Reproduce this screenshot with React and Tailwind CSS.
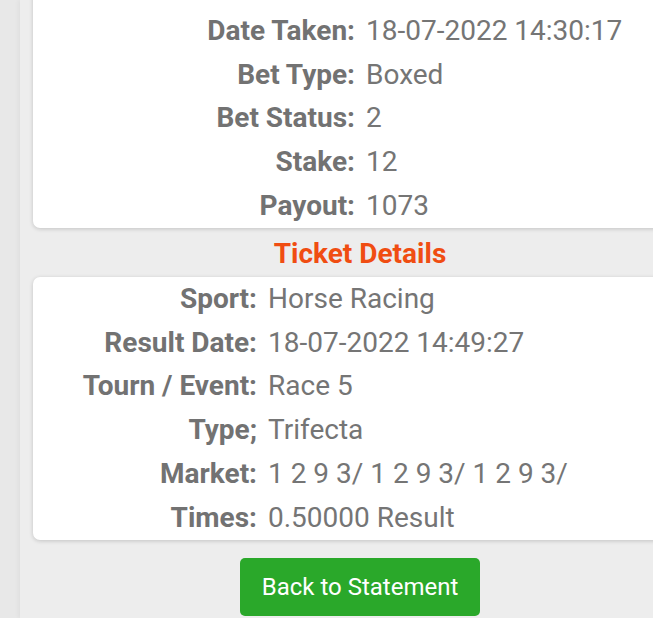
const summary = [
  ['Date Taken:', '18-07-2022 14:30:17'],
  ['Bet Type:', 'Boxed'],
  ['Bet Status:', '2'],
  ['Stake:', '12'],
  ['Payout:', '1073'],
]

const ticket = [
  ['Sport:', 'Horse Racing'],
  ['Result Date:', '18-07-2022 14:49:27'],
  ['Tourn / Event:', 'Race 5'],
  ['Type;', 'Trifecta'],
  ['Market:', '1 2 9 3/ 1 2 9 3/ 1 2 9 3/'],
  ['Times:', '0.50000 Result'],
]

const DetailRows = ({ rows, labelWidth }) => (
  <div className="flex flex-col">
    {rows.map(([label, value]) => (
      <div key={label} className="flex items-center h-[43.8px] whitespace-nowrap">
        <div className={`${labelWidth} text-right font-bold text-[#727272] shrink-0`}>{label}</div>
        <div className="pl-[11px] text-[#757575]">{value}</div>
      </div>
    ))}
  </div>
)

export default function App() {
  return (
    <div
      className="w-[653px] h-[618px] overflow-hidden bg-[#e8e8e8] text-[28px]"
      style={{ fontFamily: 'Roboto, "Noto Sans", sans-serif' }}
    >
      <div className="ml-[20px] h-full flex flex-col bg-[#ededed] pl-[13px] shadow-[-2px_0_4px_rgba(0,0,0,0.04)]">
        <div className="w-[654px]">
          <div className="-mt-[30px] pt-[39px] bg-white rounded-b-[7px] shadow-[0_1px_4px_rgba(0,0,0,0.18)]">
            <DetailRows rows={summary} labelWidth="w-[322px]" />
          </div>
          <div className="h-[49px] pt-[3px] flex items-center justify-center text-[#f04d12] font-bold">
            Ticket Details
          </div>
          <div className="bg-white rounded-[7px] shadow-[0_1px_4px_rgba(0,0,0,0.18)]">
            <DetailRows rows={ticket} labelWidth="w-[224px]" />
          </div>
          <div className="flex justify-center pt-[18px]">
            <button className="w-[240px] h-[58px] rounded-[5px] bg-[#2aa82a] text-white text-[24px]">
              Back to Statement
            </button>
          </div>
        </div>
      </div>
    </div>
  )
}
